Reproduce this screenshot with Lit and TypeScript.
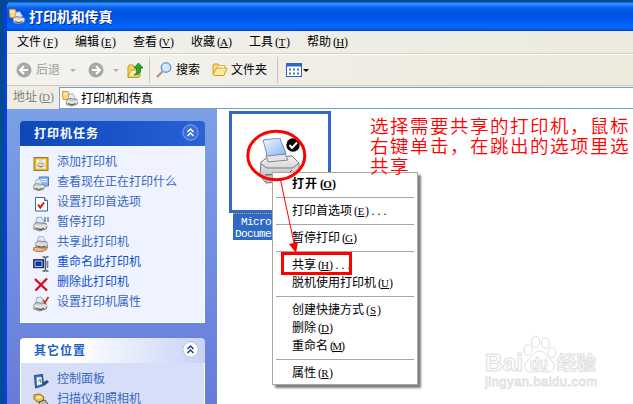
import { LitElement, html, svg, css } from "lit";
import { customElement, property } from "lit/decorators.js";

/* Splits mnemonic text such as "(F)" into half-width cells, underlining the key. */
const cells = (key: string, tail = "") => html`<span class="cells"
  ><i class="open">(</i><i class="key">${key}</i><i>)</i>${tail.split("").map((c) => html`<i>${c}</i>`)}</span
>`;

const printerShape = (x: number, y: number, s = 1) => svg`
  <g transform="translate(${x} ${y}) scale(${s})">
    <path d="M3 7 L4 1 L9 0 L12 5 L11 8Z" fill="#dcebfb" stroke="#8298b4" stroke-width=".8"/>
    <path d="M1 8 L4 6 L14 7 L15 10 L14 13 L7 15 L1 13Z" fill="#d4d4d0" stroke="#6d6f72" stroke-width=".9"/>
    <path d="M1 9 L8 11 L15 9" fill="none" stroke="#f8f8f8" stroke-width="1"/>
    <path d="M3 12 L8 13.5 L12 12" fill="none" stroke="#4c4e50" stroke-width="1.2"/>
  </g>`;

const icons: Record<string, unknown> = {
  title: svg`<path d="M0 .5h6l1 2v6H1z" fill="#ffd978" stroke="#d29a26"/><path d="M2 3h3" stroke="#fff"/>${printerShape(3.4, 2.6, 0.83)}`,
  add: svg`<rect x="1" y="1.500" width="14" height="13" fill="#e8b62d" stroke="#9a7a2c"/><rect x="3.500" y="3.500" width="9" height="9" fill="#fff8dc" stroke="#f9dc7c"/>${printerShape(4.2, 4.2, 0.48)}`,
  queue: svg`<path d="M6 1h9.500v9H8z" fill="#8bb8ee" stroke="#4a79b8"/><path d="M8 3.500h6M9 5.500h5" stroke="#e9f4ff"/>${printerShape(0, 3, 0.78)}`,
  prefs: svg`<path d="M2.500 1.500h9l3 3v10.500h-12z" fill="#fff" stroke="#43648f"/><path d="M11.500 1.500v3h3" fill="#c6daf3" stroke="#43648f"/><path d="M5 8.500l2.300 3L11 6.500" fill="none" stroke="#c51d12" stroke-width="2"/>`,
  pause: svg`${printerShape(0, 1, 0.93)}<path d="M12 1v5M15 1v5" stroke="#5d83b8" stroke-width="1.500"/>`,
  share: svg`${printerShape(2, 0, 0.84)}<path d="M0 12l4-1 4 1h4l3-1-2 3-4 1.500H4L0 14z" fill="#efb77c" stroke="#a0622f" stroke-width=".8"/>`,
  rename: svg`<rect x=".7" y="3.700" width="10" height="8" fill="#0a36b4" stroke="#222" stroke-width="1"/><path d="M2 5h7v5.500H2z" fill="none" stroke="#fff" stroke-width=".7"/><path d="M9.500 1h2l1 1 1-1h2M12.500 2v12M9.500 15h2l1-1 1 1h2" fill="none" stroke="#555e70" stroke-width="1.400"/><path d="M14.500 5v7" stroke="#77809a" stroke-width="1.600"/>`,
  remove: svg`<path d="M2 3l12 11.500M14 2.500L2.500 14.500" stroke="#d4111b" stroke-width="2.400"/>`,
  props: svg`${printerShape(0, 1, 0.93)}<path d="M10 4l2 2.500L15.500 1" fill="none" stroke="#d12a1c" stroke-width="1.700"/>`,
  control: svg`<path d="M1.500 2.500l8-1 1 11-8 2.500z" fill="#3a74bd" stroke="#234d85"/><path d="M3.500 4.500l5-.5.5 7-5 1.500z" fill="#f1f6ff"/><path d="M5 9l2-3 1 4" fill="none" stroke="#6b9a3b"/><path d="M9 10l5-3 2 2-5 4z" fill="#2f4f7d"/>`,
  scanner: svg`<path d="M1 2l6-1 4 3-1 4-6 1-3-3z" fill="#f2c24b" stroke="#8a6a1d"/><path d="M3 4l4-1 2 2-4 1z" fill="#fff1b8"/><path d="M6 9l6-2 3 4-2 4-6-1z" fill="#b9bec6" stroke="#555"/>`,
  up: svg`<path d="M1 5l1-2h4l1 2h6v9l-2 1.500H1z" fill="#f4d366" stroke="#c29a2a"/><path d="M1 15l3-7h10l-3 7z" fill="#fdeb9e" stroke="#c9a235"/><path d="M7 13c3-1 3-4 2.500-7H7l4.500-5L16 6h-2.600c.5 4-1 7-6.400 7z" fill="#2fa52f" stroke="#14701a" stroke-width=".8"/>`,
  search: svg`<path d="M6.500 9.500L1 15" stroke="#c9936a" stroke-width="2.400"/><circle cx="10" cy="5.500" r="4.700" fill="#cfe9fb" stroke="#6e9ccd" stroke-width="1.500"/><path d="M7.500 5a3 3 0 012.500-2" stroke="#fff" fill="none"/>`,
  folders: svg`<path d="M1 12V3l1-1h4l1 1.500h5V6" fill="#f8dc7d" stroke="#cf9a2d"/><path d="M1 12.500L4.500 6H15l-3 7.500H2z" fill="#fdea9f" stroke="#cf9a2d"/><path d="M5 5l1-1.500h7L12.500 6" fill="#fff6cc" stroke="#d5a440" stroke-width=".8"/>`,
  views: svg`<rect x=".5" y="1.500" width="15" height="13" fill="#fff" stroke="#2c62b0"/><path d="M1 3h14" stroke="#2c68c6" stroke-width="3"/><g fill="#4977a8"><path d="M3 6.500h2v2H3zM7 6.500h2v2H7zM11 6.500h2v2h-2zM3 10.500h2v2H3zM7 10.500h2v2H7zM11 10.500h2v2h-2z"/></g>`,
  back: svg`<circle cx="8" cy="8" r="7.500" fill="#a8a8a6"/><path d="M8 4L4 8l4 4M4.500 8H12" fill="none" stroke="#fff" stroke-width="2"/>`,
  forward: svg`<circle cx="8" cy="8" r="7.500" fill="#a8a8a6"/><path d="M8 4l4 4-4 4M11.500 8H4" fill="none" stroke="#fff" stroke-width="2"/>`,
};

@customElement("xp-icon")
class XpIcon extends LitElement {
  @property() name = "";
  static styles = css`
    :host { display: block; width: 16px; height: 16px; flex: none; }
    svg { display: block; }
  `;
  render() {
    return html`<svg width="16" height="16" viewBox="0 0 16 16">${icons[this.name]}</svg>`;
  }
}

@customElement("task-group")
class TaskGroup extends LitElement {
  @property() heading = "";
  @property({ type: Boolean, reflect: true }) primary = false;
  @property({ attribute: false }) items: string[][] = [];
  static styles = css`
    :host { display: block; width: 185px; flex: none; }
    .head {
      height: 25px; box-sizing: border-box; padding: 0 6px 2px 14px; border-radius: 4px 4px 0 0;
      display: flex; align-items: center; justify-content: space-between;
      color: #215dc6; font-weight: 700; letter-spacing: 1px;
      background: linear-gradient(90deg, #fff 30%, #c6d3f7);
    }
    .head span { padding-top: 2px; }
    .body { background: #d6dff7; border: 1px solid #fff; border-top: 0; padding: 6px 0 10px 12px; }
    :host([primary]) .head { color: #fff; background: linear-gradient(90deg, #0d49b6, #1c55cc 60%, #2963d6); }
    :host([primary]) .body { background: #eff3ff; }
    .row { display: flex; align-items: center; height: 20px; gap: 8px; color: #3a68bd; white-space: nowrap; }
    .row xp-icon { position: relative; top: 2px; }
    .strong { color: #0f50cf; }
    svg { display: block; }
  `;
  render() {
    const fg = this.primary ? "#fff" : "#23427c";
    return html`
      <div class="head">
        <span>${this.heading}</span>
        <svg width="17" height="17" viewBox="0 0 17 17">
          <circle cx="8.500" cy="8.500" r="7.700" fill=${this.primary ? "#3d6fd8" : "#fff"} stroke=${this.primary ? "#87a9ee" : "#b5bfdc"} />
          <path d="M5.500 8l3-3 3 3M5.500 12l3-3 3 3" fill="none" stroke=${fg} stroke-width="1.500" />
        </svg>
      </div>
      <div class="body">
        ${this.items.map(
          ([icon, label, tone]) => html`<div class="row"><xp-icon name=${icon}></xp-icon><span class=${tone ?? ""}>${label}</span></div>`,
        )}
      </div>
    `;
  }
}

const menus = [["文件", "F"], ["编辑", "E"], ["查看", "V"], ["收藏", "A"], ["工具", "T"], ["帮助", "H"]];

const tasks = [
  ["add", "添加打印机"],
  ["queue", "查看现在正在打印什么"],
  ["prefs", "设置打印首选项"],
  ["pause", "暂停打印"],
  ["share", "共享此打印机"],
  ["rename", "重命名此打印机", "strong"],
  ["remove", "删除此打印机", "strong"],
  ["props", "设置打印机属性"],
];

const places = [["control", "控制面板"], ["scanner", "扫描仪和照相机"]];

/* null stands for a separator */
const contextItems: (string[] | null)[] = [
  ["打开", "O", "", "default"],
  null,
  ["打印首选项", "E", "..."],
  null,
  ["暂停打印", "G"],
  null,
  ["共享", "H", "..."],
  ["脱机使用打印机", "U"],
  null,
  ["创建快捷方式", "S"],
  ["删除", "D"],
  ["重命名", "M"],
  null,
  ["属性", "R"],
];

@customElement("app-root")
class AppRoot extends LitElement {
  static styles = css`
    :host {
      display: block; position: relative; width: 633px; height: 404px; overflow: hidden;
      box-sizing: border-box; padding: 2px 0 0 4px; background: #004b91;
      font: 12px/16px "Liberation Sans", "Noto Sans CJK SC", sans-serif; color: #000;
    }
    .window {
      height: 420px; box-sizing: border-box; border-left: 3px solid #0a3fdc; border-radius: 7px 0 0 0;
      background: #fff; display: flex; flex-direction: column; overflow: hidden;
    }
    .title {
      height: 29px; flex: none; margin-left: -3px; padding: 1px 0 0 5px; box-sizing: border-box;
      display: flex; align-items: center; gap: 4px;
      color: #fff; font-size: 14px; font-weight: 700; letter-spacing: -0.1px; text-shadow: 1px 1px 0 #0a2a86;
      background: linear-gradient(#0c5fe0 0, #3a93ff 7%, #0a63ee 18%, #0054e3 35%, #0057e8 62%, #0066fe 82%, #0062f6 92%, #0040c4 100%);
    }
    .menubar {
      height: 22px; flex: none; display: flex; align-items: center; gap: 16px; padding-left: 10px;
      background: linear-gradient(90deg, #f1f1ef, #ecebdd); border-bottom: 1px solid #d4d1bd;
    }
    .cells { display: inline-flex; font-family: "Liberation Serif", serif; }
    .cells i { font-style: normal; width: 6px; display: flex; justify-content: center; }
    .cells .open { justify-content: flex-end; }
    .cells .key { text-decoration: underline; font-size: 11px; }
    .tools {
      height: 32px; flex: none; box-sizing: border-box; display: flex; align-items: center; padding: 0 0 0 9px;
      background: linear-gradient(90deg, #f3f2ef, #eceadb); border-top: 1px solid #fff; border-bottom: 1px solid #cdcab7;
    }
    .tools .dim { color: #9f9d94; margin-left: 4px; }
    .caret { border: 3px solid transparent; border-top-color: #b3b0a4; border-bottom: 0; }
    .caret.dark { border-top-color: #000; margin-left: 1px; }
    .back-caret { margin: 0 12px 0 10px; }
    .fwd-caret { margin: 0 8px 0 9px; }
    .rule { width: 1px; height: 26px; background: #c9c6b5; }
    .first-rule { margin-left: 6px; }
    .search { margin: 0 4px 0 6px; }
    .folders { margin: 0 3px 0 12px; }
    .after-folders { margin: 0 8px 0 10px; }
    .address { height: 23px; flex: none; box-sizing: border-box; padding-top: 1px; display: flex; background: #efeee6; }
    .address .label { width: 52px; padding: 2px 0 0 6px; box-sizing: border-box; color: #84827a; white-space: nowrap; }
    .field {
      flex: 1; box-sizing: border-box; border: 1px solid #7f9db9; border-right: 0; background: #fff;
      display: flex; align-items: center; gap: 3px; padding: 2px 0 0 2px;
    }
    .main { flex: 1; min-height: 0; display: flex; }
    .side {
      width: 210px; box-sizing: border-box; padding: 12px 0 0 13px; overflow: hidden;
      display: flex; flex-direction: column; gap: 15px;
      background: linear-gradient(#7ba0e6, #6679d9);
    }
    .view { flex: 1; background: #fff; }

    .printer { position: absolute; left: 229px; top: 111px; width: 102px; }
    .thumb { box-sizing: border-box; height: 102px; border: 3px solid #316ac5; background: #fff; padding: 24px 0 0 26px; }
    .thumb svg { display: block; }
    .caption {
      margin: 0 4px; height: 27px; box-sizing: border-box; background: #316ac5; color: #fff; text-align: center;
      font: 11px/12px "Liberation Mono", monospace; letter-spacing: -0.6px; white-space: nowrap;
      border-top: 1px dotted #cfa36a; padding-top: 2px;
    }

    .context {
      position: absolute; left: 272px; top: 172px; width: 146px; box-sizing: border-box; padding: 2px 3px;
      border: 1px solid #aca899; background: #fff; box-shadow: 3px 3px 2px rgba(0, 0, 0, 0.5);
    }
    .item { height: 18px; line-height: 18px; padding-left: 16px; display: flex; white-space: nowrap; }
    .item.default { font-weight: 700; letter-spacing: 1px; }
    .default .cells i { letter-spacing: 0; }
    .default .cells .key { width: 7px; }
    .sep { height: 9px; display: flex; align-items: center; }
    .sep::after { content: ""; flex: 1; height: 1px; background: #aca899; }

    .marks { position: absolute; left: 0; top: 0; }
    .note {
      position: absolute; left: 370px; top: 115px; width: 264px; color: #f00;
      font: 350 18.500px/20px "Noto Sans CJK SC", sans-serif; letter-spacing: 1.500px; white-space: nowrap;
    }
    .brand { position: absolute; left: 480px; top: 330px; }
    .brand text { font-family: "Liberation Sans", "Noto Sans CJK SC", sans-serif; }
  `;

  render() {
    return html`
      <div class="window">
        <div class="title"><xp-icon name="title"></xp-icon><span>打印机和传真</span></div>
        <div class="menubar">${menus.map(([t, k]) => html`<span>${t}${cells(k)}</span>`)}</div>
        <div class="tools">
          <xp-icon name="back"></xp-icon><span class="dim">后退</span><span class="caret back-caret"></span>
          <xp-icon name="forward"></xp-icon><span class="caret fwd-caret"></span>
          <xp-icon name="up"></xp-icon><span class="rule first-rule"></span>
          <xp-icon class="search" name="search"></xp-icon><span>搜索</span>
          <xp-icon class="folders" name="folders"></xp-icon><span>文件夹</span>
          <span class="rule after-folders"></span><xp-icon name="views"></xp-icon><span class="caret dark"></span>
        </div>
        <div class="address">
          <div class="label">地址${cells("D")}</div>
          <div class="field"><xp-icon name="title"></xp-icon><span>打印机和传真</span></div>
        </div>
        <div class="main">
          <div class="side">
            <task-group primary heading="打印机任务" .items=${tasks}></task-group>
            <task-group heading="其它位置" .items=${places}></task-group>
          </div>
          <div class="view"></div>
        </div>
      </div>

      <div class="printer">
        <div class="thumb">
          <svg width="50" height="48" viewBox="258 138 50 48">
            <defs>
              <linearGradient id="paper" x2="1" y2="1"><stop offset="0" stop-color="#f2f8ff" /><stop offset="1" stop-color="#86b3ee" /></linearGradient>
              <linearGradient id="case" x2="0" y2="1"><stop offset="0" stop-color="#f4f4f4" /><stop offset="1" stop-color="#b4b4b6" /></linearGradient>
            </defs>
            <path d="M261 162l7-5 24-1 7 7v12l-7 6-26 2-6-7z" fill="url(#case)" stroke="#77787a" />
            <path d="M261 164l6 4h26l6-5" fill="none" stroke="#77787a" />
            <path d="M266 155l19-1 3 6-20 2z" fill="#e4e4e4" stroke="#85878a" />
            <path d="M267 156c-1-6-3-12-4-16l17-2c1 6 5 10 6 16z" fill="url(#paper)" stroke="#6c93cb" />
            <path d="M265 175l23-1 4-4M266 179l22-1" fill="none" stroke="#555" />
            <circle cx="293" cy="145" r="6.700" fill="#000" />
            <path d="M289.500 145l2.500 3 5-5.500" fill="none" stroke="#fff" stroke-width="2" />
          </svg>
        </div>
        <div class="caption">Microsoft XPS<br />Document Writer</div>
      </div>

      <div class="context">
        ${contextItems.map((it) =>
          it ? html`<div class="item ${it[3] ?? ""}">${it[0]}${cells(it[1], it[2])}</div>` : html`<div class="sep"></div>`,
        )}
      </div>

      <svg class="marks" width="633" height="404" fill="none" stroke="#f00">
        <ellipse cx="276.300" cy="155.500" rx="28.500" ry="24.300" stroke-width="3" />
        <path d="M280.500 180L294 243" />
        <path d="M289 244l9-2-2 11z" fill="#f00" stroke="none" />
        <rect x="282.500" y="253.500" width="68" height="20" stroke-width="3" />
      </svg>

      <div class="note">选择需要共享的打印机，鼠标<br />右键单击，在跳出的选项里选<br />共享</div>

      <svg class="brand" width="130" height="64" fill="#fff" stroke="#dedede">
        <text x="5" y="41" font-size="24" font-weight="700" textLength="38" lengthAdjust="spacingAndGlyphs">Bai</text>
        <path d="M59 21c-6 0-7 7-12 10-4 3-3 11 4 11 5 0 11-1 16 0 8 0 9-8 5-11-5-3-6-10-13-10z" />
        <ellipse cx="48" cy="20" rx="4" ry="5.500" /><ellipse cx="55.500" cy="12" rx="4" ry="5.700" />
        <ellipse cx="65.500" cy="13" rx="4" ry="5.500" /><ellipse cx="72" cy="22.500" rx="4" ry="5.300" />
        <text x="50" y="40" font-size="18" font-weight="700" textLength="18" lengthAdjust="spacingAndGlyphs">du</text>
        <text x="77" y="40" font-size="19.500" font-weight="700" textLength="39">经验</text>
        <text x="5" y="56" font-size="13" stroke-width=".8" textLength="112">jingyan.baidu.com</text>
      </svg>
    `;
  }
}
